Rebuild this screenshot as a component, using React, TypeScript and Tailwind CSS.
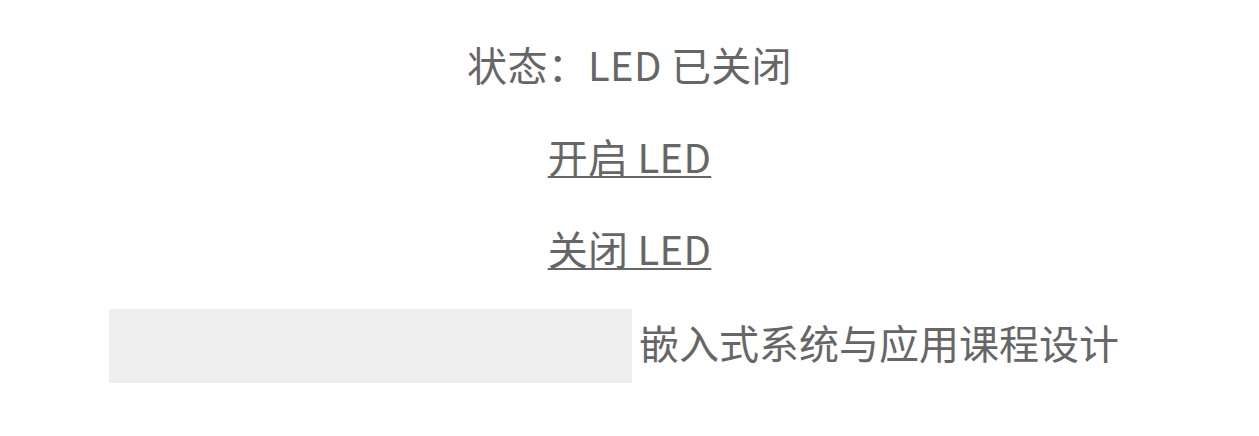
import React from 'react';

const FONT = "font-['Microsoft_YaHei','Noto_Sans_CJK_SC',sans-serif]";

export default function App() {
  return (
    <div className={`min-h-screen bg-white text-[#666666] text-[40px] ${FONT}`}>
      <div className="flex flex-col items-center pt-[37px]">
        <p className="h-[54px] leading-[54px] tracking-[0.3px]">状态：LED 已关闭</p>

        <a
          href="#"
          className="mt-[38px] h-[54px] leading-[54px] tracking-[0.3px] underline decoration-2 underline-offset-[3px]"
        >
          开启 LED
        </a>

        <a
          href="#"
          className="mt-[38px] h-[54px] leading-[54px] tracking-[0.3px] underline decoration-2 underline-offset-[3px]"
        >
          关闭 LED
        </a>

        {/* logo image placeholder + course title */}
        <div className="mt-[34px] flex items-center pr-[31px]">
          <div className="h-[74px] w-[523px] bg-[#eeeeee]" />
          <span className="ml-[7px] pb-[8px] leading-[54px]">嵌入式系统与应用课程设计</span>
        </div>
      </div>
    </div>
  );
}
